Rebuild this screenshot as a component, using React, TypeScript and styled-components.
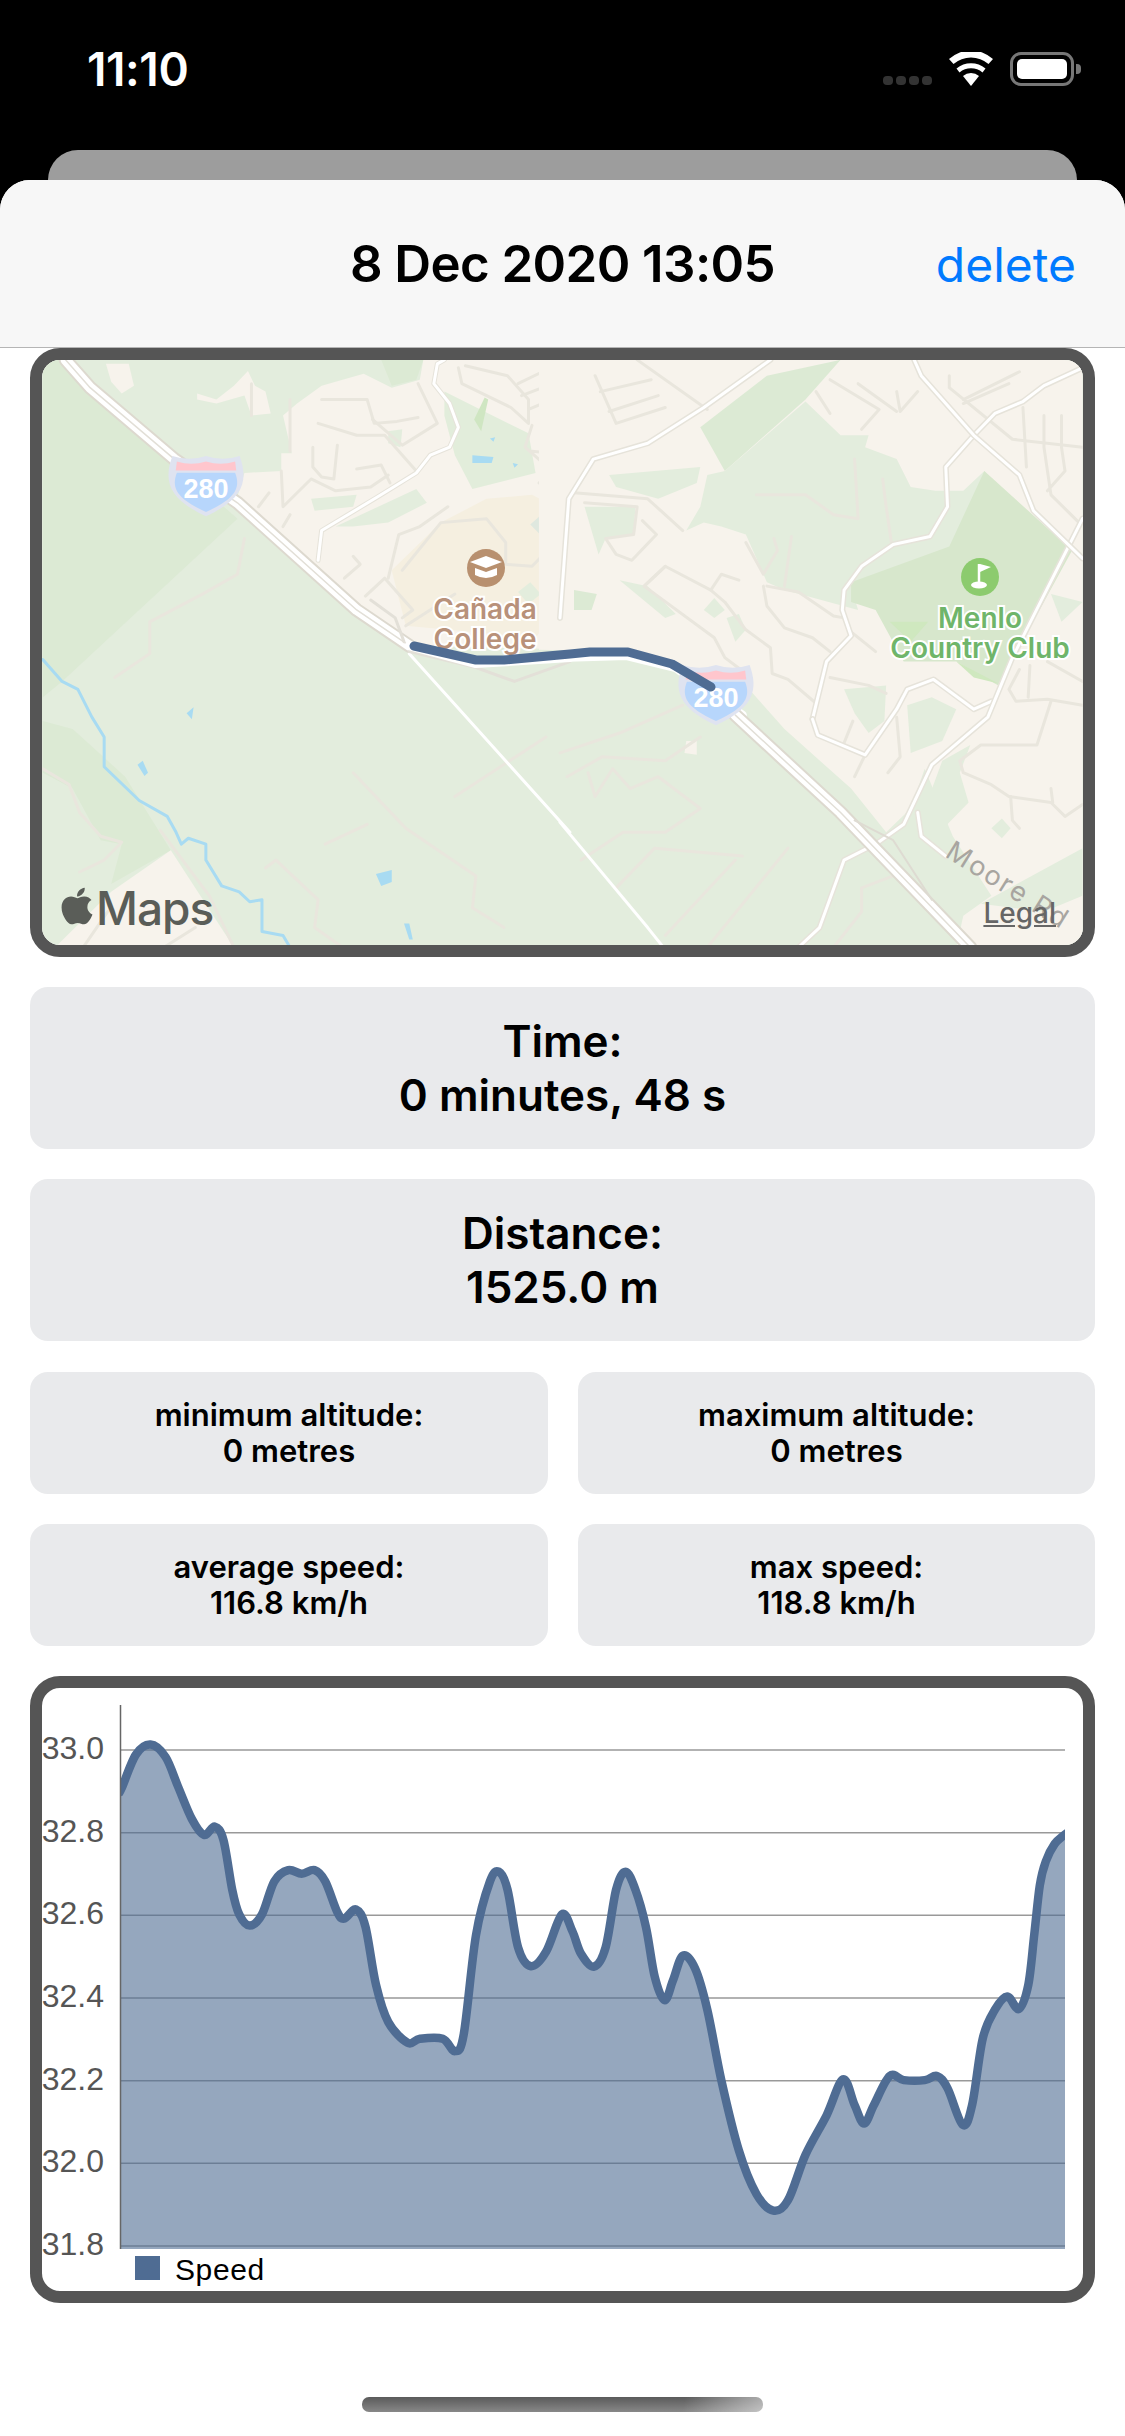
import React from 'react'
import styled, { createGlobalStyle } from 'styled-components'
import { FaApple } from 'react-icons/fa'

const GlobalStyle = createGlobalStyle`
  html, body {
    margin: 0;
    padding: 0;
    background: #000;
  }
  body {
    width: 1125px;
    height: 2436px;
    overflow: hidden;
    font-family: Inter, "Liberation Sans", sans-serif;
  }
`

const Screen = styled.div`
  width: 1125px;
  height: 2436px;
  display: flex;
  flex-direction: column;
  background: #000;
`

const StatusBar = styled.div`
  height: 120px;
  display: flex;
  justify-content: space-between;
  align-items: flex-start;
  padding: 45px 51px 0 87px;
  box-sizing: border-box;
  color: #fff;
`
const Clock = styled.span`
  font-size: 46px;
  font-weight: 600;
  line-height: 48px;
  letter-spacing: -0.4px;
`
const StatusIcons = styled.div`
  display: flex;
  align-items: flex-end;
  margin-top: 7px;
  height: 34px;
`
const SignalDots = styled.div`
  display: flex;
  gap: 3px;
  margin-right: 16px;
  padding-bottom: 1px;
`
const SignalDot = styled.i`
  width: 10px;
  height: 9px;
  border-radius: 4px;
  background: #333;
`
const Battery = styled.div`
  width: 64px;
  height: 34px;
  margin-left: 16px;
  padding: 4px;
  box-sizing: border-box;
  border: 3px solid #777;
  border-radius: 11px;
  position: relative;
  &::after {
    content: '';
    position: absolute;
    right: -10px;
    top: 9px;
    width: 5px;
    height: 10px;
    border-radius: 0 4px 4px 0;
    background: #777;
  }
`
const BatteryFill = styled.div`
  height: 100%;
  border-radius: 5px;
  background: #fff;
`

const BackCard = styled.div`
  height: 60px;
  margin: 30px 48px -30px;
  border-radius: 30px 30px 0 0;
  background: #9d9d9d;
  flex: none;
`

const Sheet = styled.div`
  flex: 1;
  border-radius: 30px 30px 0 0;
  background: #fff;
  overflow: hidden;
  position: relative;
`
const Header = styled.header`
  height: 168px;
  box-sizing: border-box;
  display: flex;
  align-items: center;
  justify-content: center;
  background: #f7f7f7;
  border-bottom: 1px solid #b5b5b5;
  position: relative;
`
const Title = styled.h1`
  margin: 0;
  font-size: 51px;
  font-weight: 600;
  color: #000;
  letter-spacing: -0.6px;
`
const DeleteButton = styled.button`
  position: absolute;
  right: 49px;
  top: 50%;
  transform: translateY(-50%);
  padding: 0;
  border: 0;
  background: none;
  font-family: inherit;
  font-size: 48px;
  color: #007aff;
`

const Content = styled.main`
  display: flex;
  flex-direction: column;
  align-items: stretch;
  padding: 0 30px;
  gap: 30px;
`

const Frame = styled.section<{ $height: number }>`
  height: ${p => p.$height}px;
  box-sizing: border-box;
  border: 12px solid #555;
  border-radius: 30px;
  background: #fff;
  overflow: hidden;
  position: relative;
  svg {
    display: block;
  }
`

const MapLogo = styled.div`
  position: absolute;
  left: 17px;
  bottom: 14px;
  display: flex;
  align-items: flex-end;
  gap: 1px;
  color: #5a5d58;
  font-size: 46px;
  font-weight: 500;
  line-height: 46px;
  letter-spacing: -1px;
  svg {
    width: 36px;
    height: 42px;
    margin-bottom: 4px;
  }
`
const LegalLink = styled.a`
  position: absolute;
  right: 27px;
  bottom: 15px;
  font-size: 28px;
  line-height: 34px;
  font-weight: 500;
  color: #666;
  text-decoration: underline;
`

const StatCard = styled.div<{ $small?: boolean }>`
  height: ${p => (p.$small ? 122 : 162)}px;
  display: flex;
  flex-direction: column;
  align-items: center;
  justify-content: center;
  border-radius: 18px;
  background: #e9eaec;
  color: #000;
  font-size: ${p => (p.$small ? 31 : 44)}px;
  line-height: ${p => (p.$small ? 36 : 54)}px;
  font-weight: 600;
`
const StatGrid = styled.div`
  display: grid;
  grid-template-columns: 518px 517px;
  column-gap: 30px;
  row-gap: 30px;
  margin-top: 1px;
`

const HomeIndicator = styled.div`
  position: absolute;
  left: 362px;
  bottom: 24px;
  width: 401px;
  height: 15px;
  border-radius: 7px;
  background: linear-gradient(100deg, rgba(255,255,255,0) 80%, rgba(255,255,255,0.5) 100%), linear-gradient(#5a5a5a, #888);
`

// map outlines traced from the two halves of the map, hence the two groups
const West = 'translate(20 340) scale(.3507 .397)'
const East = 'translate(560 340) scale(.3507 .397)'

const Poly = styled.path.attrs({ vectorEffect: 'non-scaling-stroke' })<{ $fill: string }>`
  fill: ${p => p.$fill};
  stroke: none;
`
const Line = styled.path.attrs({ vectorEffect: 'non-scaling-stroke' })<{ $color: string; $width: number }>`
  fill: none;
  stroke: ${p => p.$color};
  stroke-width: ${p => p.$width}px;
  stroke-linecap: round;
  stroke-linejoin: round;
`
const PlaceLabel = styled.text<{ $color: string }>`
  font-family: Inter, "Liberation Sans", sans-serif;
  font-size: 28px;
  font-weight: 600;
  text-anchor: middle;
  fill: ${p => p.$color};
  stroke: #fff;
  stroke-width: 4px;
  paint-order: stroke;
`
const StreetLabel = styled.text`
  font-family: Inter, "Liberation Sans", sans-serif;
  font-size: 27px;
  letter-spacing: 2px;
  fill: #a8a5a0;
`
const ShieldNumber = styled.text`
  font-family: "Liberation Sans", sans-serif;
  font-size: 27px;
  font-weight: 700;
  text-anchor: middle;
  fill: #fff;
`

const Shield = ({ x, y }: { x: number; y: number }) => (
  <g transform={ `translate(${x} ${y})` }>
    <g transform='scale(1.12)'>
      <path d='M-30,-26 Q-15,-21 0,-26 Q15,-21 30,-26 C38,-4 34,12 0,28 C-34,12 -38,-4 -30,-26 Z' fill='#dfe3f0' />
      <path d='M-26,-11 L26,-11 C31,2 27,12 0,24 C-27,12 -31,2 -26,-11 Z' fill='#b7d6fc' />
      <path d='M-26,-21 Q-13,-17 0,-21 Q13,-17 26,-21 L27,-13 L-27,-13 Z' fill='#ffc6cd' />
    </g>
    <ShieldNumber y='13'>280</ShieldNumber>
  </g>
)

const westStreets = [
  'M745,330 L750,420 L830,350 L900,380 L1000,370 L1050,340',
  'M835,270 L835,320 L860,345 L895,350 L905,265',
  'M850,210 L960,240 L1040,240 L1130,330',
  'M860,150 L990,150 L1010,210 L1075,205 L1135,195',
  'M1005,200 L1090,265 L1190,210 L1135,110',
  'M960,325 L1030,315 L1055,360',
  'M660,190 L660,110 M770,150 L770,280',
  'M1250,70 L1260,110 L1400,170 L1450,210 L1450,150 L1390,90 L1270,65',
  'M1420,110 L1490,80 M1430,140 L1520,110 M1450,175 L1530,145',
  'M1460,215 L1440,270 L1530,340 L1568,290 L1460,280',
  'M1480,360 L1568,400',
  'M1050,600 L1080,490 L1140,470 L1220,420',
  'M925,600 L970,565 L950,545 M985,645 L1040,600 L1120,680 L1090,700',
  'M750,470 L770,440 M680,420 L710,385',
  'M1090,580 L1200,460 L1330,450 L1385,510 L1385,565 L1460,570 L1510,525 L1550,540',
  'M1100,720 L1240,640',
  'M65,1080 L140,1120 L170,1190 L230,1250 L290,1265 L240,1310 L170,1340',
  'M270,850 L370,790 L370,710 L520,640 L620,590 L640,500',
  'M400,1235 L540,1400 L610,1530',
  'M950,1090 L1100,1230 L1300,1350 L1290,1430 L1380,1480',
  'M870,1270 L990,1220 M1240,1150 L1500,1000',
  'M700,1330 L730,1310 L850,1410 L840,1480 L920,1530',
  'M180,1530 L250,1440 M410,1530 L500,1480'
]
const eastStreets = [
  'M100,90 L160,210 L300,170 M115,130 L260,100 M140,180 L280,140 M220,50 L420,175',
  'M40,385 L250,400 L350,480 M70,410 L220,420 L210,490 L130,500 L160,540 L205,555 L275,490 L235,455',
  'M240,620 L300,570 L430,630 L470,660 L530,730 L600,775 L605,840 L650,855 L730,915',
  'M300,570 L240,620 L440,750 L470,800 L530,840',
  'M430,630 L460,590 L510,605 M580,620 L590,670 L640,725 L720,750 L770,785 M590,620 L680,635 L780,695 L810,700',
  'M530,510 L580,590 L620,530 L610,500 M660,495 L640,620',
  'M830,735 L900,785 M770,850 L880,870 L930,890',
  'M835,960 L810,1015 M960,950 L970,1050 L935,1090 M870,1045 L840,1100',
  'M840,300 L850,450 L780,440 L700,390 L560,390 M920,350 L930,420 L945,510',
  'M730,130 L770,185 M770,100 L910,175 L860,225 M850,110 L960,180 M960,130 L970,180 L1020,130',
  'M1110,90 L1110,120 L1290,250 L1490,270 M1150,150 L1310,80 M1150,160 L1280,110',
  'M1380,190 L1380,270 L1400,390 L1480,460 M1320,170 L1330,320 M1430,190 L1430,270 L1440,330 L1390,380',
  'M1310,830 L1280,880 L1300,910 L1390,905 L1490,920 M1340,820 L1335,900 M1390,810 L1490,860',
  'M1400,910 L1360,1020 L1200,1020 L1140,1060 L1150,1090 L1230,1120 L1280,1150 L1400,1165 L1440,1200 L1490,1170',
  'M1285,1150 L1290,1210 L1310,1230 M1400,1130 L1405,1165',
  'M0,1040 L170,990 L350,920 M20,1100 L120,1050 L300,1060 L400,1000',
  'M80,1090 L100,1150 L150,1080 L200,1130 L280,1100 L400,1180 L300,1240 L180,1240 L60,1310',
  'M160,1380 L270,1280 L520,1300 M300,1500 L500,1310 M420,1530 L650,1280',
  'M780,1530 L860,1440 L860,1380 L950,1350'
]

const PlaceMap = () => (
  <svg width='1041' height='585' viewBox='42 360 1041 585'>
    <rect x='42' y='360' width='1041' height='585' fill='#e3eddd' />
    <g transform={ West }>
      <Poly $fill='#dcead4' d='M65,50 L130,50 L200,125 L620,450 L120,860 L65,900 Z' />
      <Poly $fill='#dcead4' d='M65,1090 L150,1130 L230,1260 L290,1270 L260,1370 L430,1285 L300,1100 L150,980 L65,960 Z' />
      <Poly $fill='#f7f3ec' d='M620,395 L640,335 L745,330 L745,285 L775,285 L750,190 L790,160 L860,115 L980,85 L1060,120 L1140,100 L1150,50 L1620,50 L1620,780 L1110,770 L970,670 L850,570 L700,470 Z' />
      <Poly $fill='#f7f3ec' d='M505,135 L560,150 L610,115 L650,78 L670,115 L700,130 L715,185 L660,190 L640,140 L560,160 L505,150 Z' />
      <Poly $fill='#f7f3ec' d='M245,60 L310,60 L325,115 L290,135 L260,105 Z' />
      <Poly $fill='#f7f3ec' d='M100,1530 L260,1390 L430,1285 L610,1530 Z' />
      <Poly $fill='#dcead4' d='M1030,50 L1150,50 L1130,100 L1060,115 Z' />
      <Poly $fill='#e2eddb' d='M1210,130 L1450,235 L1470,335 L1290,375 L1240,290 L1210,190 Z' />
      <Poly $fill='#cfe6c2' d='M1295,200 L1325,145 L1335,150 L1315,230 Z' />
      <Poly $fill='#e3eddd' d='M830,400 L960,390 L950,420 L840,430 Z' />
      <Poly $fill='#e3eddd' d='M900,470 L1130,375 L1160,410 L1050,460 L950,470 Z' />
      <Poly $fill='#e3eddd' d='M1050,230 L1090,225 L1085,270 L1050,260 Z' />
      <Poly $fill='#f5efe0' d='M1060,580 L1200,460 L1330,400 L1460,390 L1568,440 L1568,640 L1470,750 L1100,720 Z' />
      <Poly $fill='#dfe8df' d='M1455,465 L1480,445 L1520,480 L1500,505 Z' />
      <Poly $fill='#e3eddd' d='M1420,635 L1455,610 L1485,640 L1450,665 Z' />
      <Poly $fill='#a8dbf2' d='M475,940 L495,925 L490,955 Z' />
      <Poly $fill='#a8dbf2' d='M335,1070 L350,1060 L365,1090 L355,1098 Z' />
      <Poly $fill='#a8dbf2' d='M1015,1345 L1060,1335 L1060,1365 L1030,1375 Z' />
      <Poly $fill='#a8dbf2' d='M1095,1470 L1110,1470 L1120,1510 L1110,1510 Z' />
      <Poly $fill='#a8dbf2' d='M1290,290 L1350,295 L1345,310 L1290,310 Z' />
      <Poly $fill='#a8dbf2' d='M1405,310 L1420,313 L1410,322 Z' />
      <Poly $fill='#a8dbf2' d='M1340,248 L1355,245 L1350,256 Z' />
      { westStreets.map((d, i) => <Line key={ `ws-${i}` } d={ d } $color='#e9e6dd' $width={ 3 } />) }
      <Line d='M65,805 L120,860 L165,880 L205,950 L240,1000 L240,1075 L340,1160 L420,1200 L445,1240 L460,1270 L480,1255 L530,1270 L530,1310 L575,1375 L625,1390 L655,1415 L690,1410 L690,1490 L750,1500 L770,1530' $color='#a8dbf2' $width={ 3 } />
      <Line d='M850,555 L860,480 L1020,395 L1130,335 L1170,290 L1225,270 L1250,220 L1225,160 L1180,110 L1190,60 L1210,50' $color='#e6e3da' $width={ 5 } />
      <Line d='M850,555 L860,480 L1020,395 L1130,335 L1170,290 L1225,270 L1250,220 L1225,160 L1180,110 L1190,60 L1210,50' $color='#fff' $width={ 3 } />
      <Line d='M1110,790 L1568,1240' $color='#fff' $width={ 3 } />
      <Line d='M130,50 L200,120 L440,300 L620,410 L960,680 L1110,770' $color='#ddd9cf' $width={ 14 } />
      <Line d='M130,50 L200,120 L440,300 L620,410 L960,680 L1110,770' $color='#fff' $width={ 10 } />
      <Line d='M130,50 L200,120 L440,300 L620,410 L960,680 L1110,770' $color='#e2dfd7' $width={ 1.5 } />
      <Line d='M1000,655 L1070,700 L1095,760' $color='#e3e0d8' $width={ 3 } />
      <Line d='M1110,785 L1300,825 L1410,860 L1568,810' $color='#e3e0d8' $width={ 3 } />
      <Line d='M1110,770 L1300,815 L1568,800' $color='#fff' $width={ 9 } />
    </g>
    <g transform={ East }>
      <Poly $fill='#f7f3ec' d='M-60,50 L1490,50 L1490,1530 L1130,1530 L1150,1450 L1230,1400 L1120,1250 L1040,1080 L1000,1180 L930,1240 L830,1130 L640,980 L530,870 L480,830 L350,830 L200,785 L-60,780 Z' />
      <Poly $fill='#dcead4' d='M400,220 L590,90 L800,50 L700,150 L470,330 Z' />
      <Poly $fill='#e3eddd' d='M700,155 L800,240 L880,240 L870,270 L960,300 L1000,370 L1070,380 L1150,380 L1210,330 L1240,420 L1110,530 L830,620 L850,680 L640,630 L590,610 L530,490 L460,470 L410,460 L360,480 L400,420 L420,340 L470,330 Z' />
      <Poly $fill='#d7e7cc' d='M1210,330 L1460,530 L1250,870 L1130,810 L980,810 L900,680 L830,660 L830,610 L1110,520 Z' />
      <Poly $fill='#cfe8bf' d='M940,710 L1050,710 L1000,760 Z' />
      <Poly $fill='#cfe8bf' d='M1130,810 L1250,865 L1180,850 Z' />
      <Poly $fill='#e3eddd' d='M140,340 L400,320 L390,360 L280,400 L160,370 Z' />
      <Poly $fill='#e3eddd' d='M70,420 L215,420 L210,490 L130,500 L110,540 Z' />
      <Poly $fill='#dcead4' d='M40,630 L105,640 L90,680 L40,680 Z' />
      <Poly $fill='#e3eddd' d='M170,605 L300,700 L330,690 L250,620 Z' />
      <Poly $fill='#e3eddd' d='M410,680 L440,650 L470,680 L440,700 Z' />
      <Poly $fill='#e3eddd' d='M475,700 L510,690 L530,730 L500,760 Z' />
      <Poly $fill='#e3eddd' d='M810,880 L930,870 L925,960 L880,990 L840,940 Z' />
      <Poly $fill='#e3eddd' d='M990,920 L1060,900 L1130,930 L1090,1010 L1000,1040 Z' />
      <Poly $fill='#e3eddd' d='M1090,1060 L1170,1020 L1140,1090 L1165,1165 L1060,1260 L1040,1180 Z' />
      <Poly $fill='#e3eddd' d='M1400,640 L1490,660 L1430,710 Z' />
      <Poly $fill='#e3eddd' d='M1200,1420 L1490,1280 L1490,1400 L1380,1440 Z' />
      <Poly $fill='#f7f3ec' d='M360,1010 L390,1010 L390,1045 L355,1040 Z' />
      <Poly $fill='#f7f3ec' d='M915,1190 L940,1165 L965,1190 L940,1205 Z' />
      <Poly $fill='#e3eddd' d='M1230,1230 L1260,1205 L1285,1230 L1260,1255 Z' />
      { eastStreets.map((d, i) => <Line key={ `es-${i}` } d={ d } $color='#e9e6dd' $width={ 3 } />) }
      { [
        'M0,700 L25,400 L95,300 L250,260 L410,170 L600,50',
        'M720,955 L760,810 L830,745 L805,680 L810,630 L860,570 L950,515 L1055,495 L1105,420 L1100,320 L1180,240 L1240,185 L1320,155 L1380,115 L1490,70',
        'M720,955 L735,995 L870,1045 L960,930 L990,880 L1065,855 L1180,930 L1230,910',
        'M1490,450 L1290,800 L1220,950 L1060,1070 L980,1220 L900,1270 L810,1310 L740,1480 L680,1530',
        'M1010,50 L1030,90 L1180,240 L1310,340 L1350,430 L1490,550',
        'M1020,1190 L1030,1250 L1100,1300'
      ].map((d, i) => (
        <React.Fragment key={ `er-${i}` }>
          <Line d={ d } $color='#e6e3da' $width={ 6 } />
          <Line d={ d } $color='#fff' $width={ 3 } />
        </React.Fragment>
      )) }
      <Line d='M0,1215 L250,1480 L295,1530' $color='#fff' $width={ 3 } />
      <Line d='M0,800 L190,795 L330,825 L520,945' $color='#fff' $width={ 9 } />
      <Line d='M500,945 L800,1190 L1170,1530' $color='#ddd9cf' $width={ 14 } />
      <Line d='M500,945 L800,1190 L1170,1530' $color='#fff' $width={ 10 } />
      <Line d='M500,945 L800,1190 L1170,1530' $color='#e2dfd7' $width={ 1.5 } />
      <Line d='M840,1210 L950,1260 L1060,1410' $color='#dedbd2' $width={ 2 } />
    </g>
    <Shield x={ 206 } y={ 485 } />
    <Shield x={ 716 } y={ 694 } />

    <circle cx='486' cy='568' r='19' fill='#b8906f' />
    <path d='M470,562 L486,556 L502,562 L486,568 Z' fill='#fff' />
    <path d='M475,568 L486,572 L497,568 L497,575 Q486,581 475,575 Z' fill='#fff' />
    <PlaceLabel $color='#b8917a' x='485' y='619'>Cañada</PlaceLabel>
    <PlaceLabel $color='#b8917a' x='485' y='649'>College</PlaceLabel>

    <circle cx='980' cy='577' r='19' fill='#8ccb6e' />
    <path d='M979,564 L979,583' stroke='#fff' strokeWidth='2.5' />
    <path d='M980,564 L991,567 L980,572 Z' fill='#fff' />
    <ellipse cx='979' cy='585' rx='8' ry='3.5' fill='#fff' />
    <PlaceLabel $color='#6fb56a' x='980' y='628'>Menlo</PlaceLabel>
    <PlaceLabel $color='#6fb56a' x='980' y='658'>Country Club</PlaceLabel>

    <StreetLabel transform='translate(944 856) rotate(32)'>Moore Rd</StreetLabel>

    <Line d='M414,646 L476,660 L504,660 L570,654 L590,652 L628,652 L672,664 L711,687' $color='#4f6c93' $width={ 9 } />
  </svg>
)

// speed curve samples, traced from the left half and the right half of the plot
const leftSamples: [number, number][] = [
  [280, 300], [290, 285], [330, 205], [372, 180], [415, 210], [450, 280], [490, 360], [525, 398], [555, 378], [580, 410],
  [605, 530], [625, 590], [655, 617], [690, 590], [725, 510], [765, 483], [803, 492], [840, 483], [870, 510], [905, 585],
  [925, 600], [958, 578], [985, 620], [1015, 760], [1050, 850], [1105, 900], [1140, 890], [1205, 890], [1240, 920],
  [1265, 880], [1300, 640], [1340, 510], [1365, 487], [1390, 530], [1420, 670], [1457, 715], [1500, 680], [1545, 590]
]
const rightSamples: [number, number][] = [
  [35, 630], [60, 685], [97, 716], [130, 670], [160, 530], [187, 487], [215, 530], [245, 620], [270, 740], [298, 797],
  [322, 750], [350, 690], [385, 720], [420, 820], [460, 990], [510, 1160], [560, 1265], [608, 1305], [650, 1280],
  [700, 1170], [760, 1075], [807, 988], [840, 1050], [867, 1095], [895, 1050], [940, 980], [980, 990], [1040, 990],
  [1075, 980], [1105, 1010], [1148, 1098], [1175, 1050], [1205, 890], [1240, 820], [1275, 788], [1308, 818], [1335, 760],
  [1352, 640], [1368, 520], [1385, 462], [1410, 420], [1435, 400], [1460, 385]
]
const curvePoints = [
  ...leftSamples.map(([x, y]) => [20 + x / 2.851, 1670 + y / 2.414]),
  ...rightSamples.map(([x, y]) => [560 + x / 2.851, 1670 + y / 2.414])
]

function smoothPath(points: number[][]) {
  let d = `M${points[0][0].toFixed(1)},${points[0][1].toFixed(1)}`
  for (let i = 0; i < points.length - 1; i++) {
    const p0 = points[Math.max(i - 1, 0)]
    const p1 = points[i]
    const p2 = points[i + 1]
    const p3 = points[Math.min(i + 2, points.length - 1)]
    const c1x = p1[0] + (p2[0] - p0[0]) / 6
    const c1y = p1[1] + (p2[1] - p0[1]) / 6
    const c2x = p2[0] - (p3[0] - p1[0]) / 6
    const c2y = p2[1] - (p3[1] - p1[1]) / 6
    d += ` C${c1x.toFixed(1)},${c1y.toFixed(1)} ${c2x.toFixed(1)},${c2y.toFixed(1)} ${p2[0].toFixed(1)},${p2[1].toFixed(1)}`
  }
  return d
}

const AxisLabel = styled.text`
  font-family: "Liberation Sans", sans-serif;
  font-size: 32px;
  fill: #555;
  text-anchor: end;
`
const LegendLabel = styled.text`
  font-family: "Liberation Sans", sans-serif;
  font-size: 30px;
  letter-spacing: 0.6px;
  fill: #000;
`

const axisTicks = ['33.0', '32.8', '32.6', '32.4', '32.2', '32.0', '31.8']
const tickY = (i: number) => 1750 + i * 82.67

const SpeedChart = () => {
  const line = smoothPath(curvePoints)
  const last = curvePoints[curvePoints.length - 1]
  const area = `${line} L${last[0]},2249 L${curvePoints[0][0]},2249 Z`
  return (
    <svg width='1041' height='603' viewBox='42 1688 1041 603'>
      <defs>
        <clipPath id='plot'>
          <rect x='121' y='1700' width='944' height='549' />
        </clipPath>
      </defs>
      { axisTicks.map((tick, i) => (
        <React.Fragment key={ tick }>
          <line x1='121' x2='1065' y1={ tickY(i) } y2={ tickY(i) } stroke='#999' strokeWidth='1.5' />
          <AxisLabel x='104' y={ tickY(i) + 9 }>{ tick }</AxisLabel>
        </React.Fragment>
      )) }
      <g clipPath='url(#plot)'>
        <path d={ area } fill='#4f6c93' fillOpacity='0.6' />
        <path d={ line } fill='none' stroke='#4f6c93' strokeWidth='8.5' strokeLinejoin='round' />
      </g>
      <line x1='120.5' x2='120.5' y1='1705' y2='2249' stroke='#666' strokeWidth='1.5' />
      <rect x='135' y='2256' width='25' height='24' fill='#4f6c93' />
      <LegendLabel x='175' y='2280'>Speed</LegendLabel>
    </svg>
  )
}

const App = () => {
  return (
    <Screen>
      <GlobalStyle />
      <StatusBar>
        <Clock>11:10</Clock>
        <StatusIcons>
          <SignalDots>
            { [0, 1, 2, 3].map(i => <SignalDot key={ `dot-${i}` } />) }
          </SignalDots>
          <svg width='46' height='34' viewBox='0 0 46 34'>
            <path d='M23,34 L15,24 A12,12 0 0 1 31,24 Z' fill='#fff' />
            <path d='M11.5,19.5 A18,18 0 0 1 34.5,19.5 L37.5,15.5 A23,23 0 0 0 8.5,15.5 Z' fill='#fff' transform='translate(0 1)' />
            <path d='M5.5,12 A27,27 0 0 1 40.5,12 L45,7 A33,33 0 0 0 1,7 Z' fill='#fff' />
          </svg>
          <Battery><BatteryFill /></Battery>
        </StatusIcons>
      </StatusBar>
      <BackCard />
      <Sheet>
        <Header>
          <Title>8 Dec 2020 13:05</Title>
          <DeleteButton>delete</DeleteButton>
        </Header>
        <Content>
          <Frame $height={ 609 }>
            <PlaceMap />
            <MapLogo><FaApple />Maps</MapLogo>
            <LegalLink>Legal</LegalLink>
          </Frame>
          <StatCard>
            <span>Time:</span>
            <span>0 minutes, 48 s</span>
          </StatCard>
          <StatCard>
            <span>Distance:</span>
            <span>1525.0 m</span>
          </StatCard>
          <StatGrid>
            <StatCard $small>
              <span>minimum altitude:</span>
              <span>0 metres</span>
            </StatCard>
            <StatCard $small>
              <span>maximum altitude:</span>
              <span>0 metres</span>
            </StatCard>
            <StatCard $small>
              <span>average speed:</span>
              <span>116.8 km/h</span>
            </StatCard>
            <StatCard $small>
              <span>max speed:</span>
              <span>118.8 km/h</span>
            </StatCard>
          </StatGrid>
          <Frame $height={ 627 }>
            <SpeedChart />
          </Frame>
        </Content>
        <HomeIndicator />
      </Sheet>
    </Screen>
  )
}

export default App
